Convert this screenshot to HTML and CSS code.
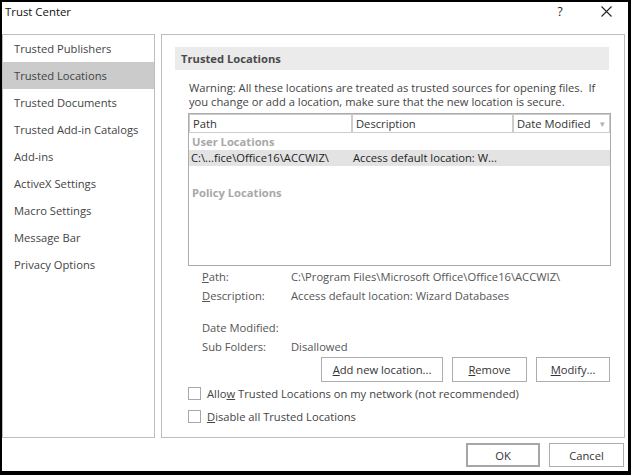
FILE: index.html
```html
<!DOCTYPE html>
<html>
<head>
<meta charset="utf-8">
<title>Trust Center</title>
<link rel="stylesheet" href="styles.css">
</head>
<body>
<div class="dialog">
  <div class="titlebar">
    <span class="title">Trust Center</span>
    <span class="help">?</span>
    <svg class="close" width="11" height="11" viewBox="0 0 11 11"><path d="M0.5 0.5 L10.5 10.5 M10.5 0.5 L0.5 10.5" stroke="#222" stroke-width="1.1" fill="none"/></svg>
  </div>
  <div class="main">
    <nav class="nav">
      <div class="nav-item">Trusted Publishers</div>
      <div class="nav-item selected">Trusted Locations</div>
      <div class="nav-item">Trusted Documents</div>
      <div class="nav-item">Trusted Add-in Catalogs</div>
      <div class="nav-item">Add-ins</div>
      <div class="nav-item">ActiveX Settings</div>
      <div class="nav-item">Macro Settings</div>
      <div class="nav-item">Message Bar</div>
      <div class="nav-item">Privacy Options</div>
    </nav>
    <section class="content">
      <div class="section-bar">Trusted Locations</div>
      <p class="warning">Warning: All these locations are treated as trusted sources for opening files.&nbsp; If you change or add a location, make sure that the new location is secure.</p>
      <div class="table">
        <div class="thead">
          <div class="th">Path</div>
          <div class="th">Description</div>
          <div class="th th-sort">Date Modified<span class="sort-arrow">&#9662;</span></div>
        </div>
        <div class="group">User Locations</div>
        <div class="row selected-row">
          <span class="cell-path">C:\...fice\Office16\ACCWIZ\</span>
          <span class="cell-desc">Access default location: W...</span>
        </div>
        <div class="group group-policy">Policy Locations</div>
      </div>
      <div class="details">
        <span class="dl"><u>P</u>ath:</span><span class="dv">C:\Program Files\Microsoft Office\Office16\ACCWIZ\</span>
        <span class="dl"><u>D</u>escription:</span><span class="dv">Access default location: Wizard Databases</span>
        <span class="dl spacer-top">Date Modified:</span><span class="dv spacer-top"></span>
        <span class="dl">Sub Folders:</span><span class="dv">Disallowed</span>
      </div>
      <div class="actions">
        <button class="btn btn-add"><u>A</u>dd new location...</button>
        <button class="btn btn-remove"><u>R</u>emove</button>
        <button class="btn btn-modify"><u>M</u>odify...</button>
      </div>
      <label class="check"><span class="box"></span><span class="check-text">Allo<u>w</u> Trusted Locations on my network (not recommended)</span></label>
      <label class="check"><span class="box"></span><span class="check-text"><u>D</u>isable all Trusted Locations</span></label>
    </section>
  </div>
  <div class="footer">
    <button class="btn btn-ok">OK</button>
    <button class="btn btn-cancel">Cancel</button>
  </div>
</div>
</body>
</html>
```
FILE: styles.css
```css
html, body {
  margin: 0;
  padding: 0;
  background: #000;
  overflow: hidden;
}
body {
  width: 631px;
  height: 475px;
  font-family: "Open Sans", "Noto Sans", sans-serif;
  font-size: 11.2px;
  color: #444;
}
.dialog {
  width: 626px;
  height: 469px;
  margin: 2px 0 0 2px;
  background: #fff;
  display: flex;
  flex-direction: column;
}
.titlebar {
  height: 32px;
  display: flex;
  align-items: flex-start;
}
.title {
  padding-left: 3px;
  line-height: 20px;
  font-size: 11.4px;
  color: #111;
}
.help {
  margin-left: auto;
  width: 12px;
  text-align: center;
  line-height: 20px;
  color: #222;
  font-size: 12px;
}
.close {
  margin: 4px 16px 0 35px;
}
.main {
  display: flex;
  gap: 6px;
  height: 404px;
}
.nav {
  width: 151px;
  border: 1px solid #bdbdbd;
  display: flex;
  flex-direction: column;
}
.nav-item {
  height: 27px;
  line-height: 27px;
  padding-left: 11px;
  color: #444;
  white-space: nowrap;
}
.nav-item.selected {
  background: #cbcbcb;
}
.content {
  width: 462px;
  border: 1px solid #bdbdbd;
  display: flex;
  flex-direction: column;
}
.section-bar {
  margin: 12px 15px 0 13px;
  height: 23px;
  line-height: 23px;
  padding-left: 6px;
  background: #ebebeb;
  font-weight: 700;
  color: #4a4a4a;
}
.warning {
  margin: 11px 14px 0 27px;
  line-height: 14px;
  color: #444;
}
.table {
  margin: 4px 13px 0 26px;
  height: 151px;
  border: 1px solid #ababab;
  display: flex;
  flex-direction: column;
}
.thead {
  display: grid;
  grid-template-columns: 162px 159px 1fr;
  gap: 2px;
  background: #cccccc;
  height: 19px;
}
.th {
  background: #fff;
  margin: 1px 0;
  line-height: 17px;
  padding-left: 3px;
  color: #333;
  display: flex;
}
.th:first-child { margin-left: 1px; }
.th:last-child { margin-right: 1px; }
.sort-arrow {
  margin-left: auto;
  margin-right: 4px;
  color: #b0b0b0;
  font-size: 9px;
}
.group {
  height: 17px;
  line-height: 17px;
  padding-left: 3px;
  font-weight: 700;
  color: #a8a8a8;
}
.group-policy {
  margin-top: 18px;
}
.row {
  height: 16px;
  line-height: 16px;
  display: flex;
  color: #222;
}
.selected-row {
  background: #e3e3e3;
}
.cell-path {
  width: 162px;
  padding-left: 2px;
  box-sizing: border-box;
}
.cell-desc {
  padding-left: 2px;
}
.details {
  display: grid;
  grid-template-columns: 89px 1fr;
  margin: 1px 0 0 40px;
  line-height: 19px;
  color: #555;
}
.spacer-top {
  margin-top: 13px;
}
.actions {
  display: flex;
  justify-content: flex-end;
  gap: 9px;
  margin: 1px 14px 0 0;
}
.btn {
  font-family: inherit;
  font-size: 11.2px;
  color: #333;
  background: #fff;
  border: 1px solid #adadad;
  padding: 0;
  height: 25px;
  margin: 0;
}
.btn-add { width: 122px; }
.btn-remove { width: 75px; }
.btn-modify { width: 74px; }
.check {
  display: flex;
  align-items: center;
  height: 23px;
  padding-left: 26px;
  color: #444;
}
.box {
  width: 11px;
  height: 11px;
  border: 1px solid #a8a8a8;
  margin-right: 6px;
  background: #fff;
}
.footer {
  display: flex;
  justify-content: flex-end;
  gap: 9px;
  padding: 5px 4px 0 0;
}
.btn-ok {
  width: 74px;
  height: 24px;
  border: 2px solid #a6a6a6;
}
.btn-cancel {
  width: 75px;
  height: 24px;
}
```
